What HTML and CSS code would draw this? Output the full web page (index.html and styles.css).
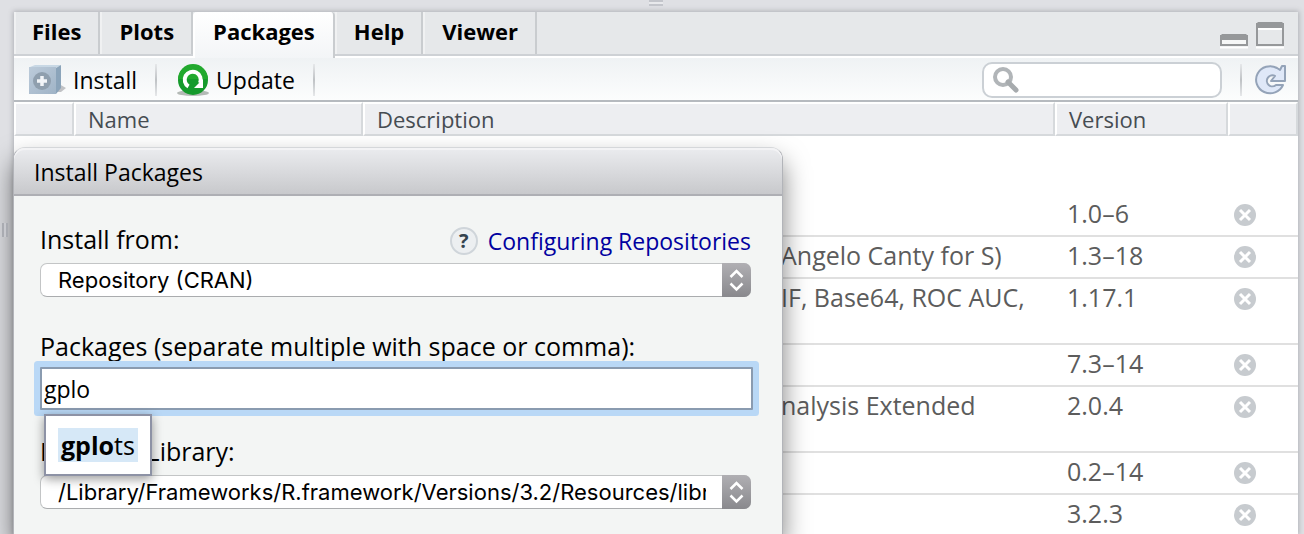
FILE: index.html
```html
<!DOCTYPE html>
<html lang="en">
<head>
<meta charset="utf-8">
<title>Packages</title>
<meta name="viewport" content="width=device-width, initial-scale=1">
<link rel="stylesheet" href="styles.css">
</head>
<body>
<svg class="defs" width="0" height="0" aria-hidden="true">
  <symbol id="remove" viewBox="0 0 22 22">
    <circle cx="11" cy="11" r="11" fill="#c7cbcf"/>
    <path d="M6 6l10 10M16 6l-10 10" stroke="#fff" stroke-width="3"/>
  </symbol>
  <symbol id="updown" viewBox="0 0 29 34">
    <path d="M8.500 14l6-6 6 6M8.500 20.500l6 6 6-6" fill="none" stroke="#fff" stroke-width="2.500"/>
  </symbol>
</svg>
<div class="grip grip-top"></div>
<div class="grip grip-left"></div>
<main class="panel">
  <nav class="tabs">
    <button class="tab">Files</button>
    <button class="tab">Plots</button>
    <button class="tab active">Packages</button>
    <button class="tab">Help</button>
    <button class="tab">Viewer</button>
    <span class="spacer"></span>
    <button class="window-button" aria-label="Minimize">
      <svg width="28" height="28" viewBox="0 0 28 28"><path d="M0 26.500h28" stroke="#fff" stroke-width="2"/><path d="M1 24V15h26v9z" fill="#f6f7f7" stroke="#96989a" stroke-width="2"/><path d="M0 19v-4l2-2h24l2 2v4z" fill="#96989a"/></svg>
    </button>
    <button class="window-button" aria-label="Maximize">
      <svg width="28" height="28" viewBox="0 0 28 28"><path d="M0 26.500h28M2 8h24" stroke="#fff" stroke-width="2"/><path d="M1 24V3h26v21z" fill="none" stroke="#96989a" stroke-width="2"/><path d="M0 7V3l2-2h24l2 2v4z" fill="#96989a"/></svg>
    </button>
  </nav>
  <div class="toolbar">
    <button class="tool">
      <svg width="40" height="32" viewBox="0 0 40 32">
        <defs><linearGradient id="box" x2="1" y2="1"><stop stop-color="#bccbda"/><stop offset="1" stop-color="#a0b4c7"/></linearGradient></defs>
        <path d="M29 28l2-8 7 4-5 4z" fill="#9b9da1" opacity=".6"/>
        <path d="M2 3l5-2h26l-5 3z" fill="#c8d8e5"/><path d="M28 4l5-3v23l-5 6z" fill="#8ba4ba"/>
        <path d="M1 3h27v27H1z" fill="url(#box)"/>
        <circle cx="14" cy="17" r="9" fill="#8f9fae"/><path d="M14 12v10M9 17h10" stroke="#f2f5f8" stroke-width="3.500"/>
      </svg>Install</button>
    <i class="divider"></i>
    <button class="tool">
      <svg width="36" height="32" viewBox="0 0 36 32">
        <ellipse cx="18" cy="29" rx="16" ry="3" fill="#8f9690" opacity=".65"/>
        <circle cx="18" cy="16" r="15" fill="#159a2c"/><path d="M3 15a15 15 0 0 1 30 0z" fill="#22a92e"/>
        <path d="M13.500 22.500A8 8 0 1 1 25 19" fill="none" stroke="#fff" stroke-width="4"/><path d="M28 15v9h-9z" fill="#fff"/>
      </svg>Update</button>
    <i class="divider"></i>
    <span class="spacer"></span>
    <label class="search">
      <svg width="27" height="27" viewBox="0 0 27 27"><circle cx="11" cy="10" r="8" fill="none" stroke="#b1b5b8" stroke-width="4"/><path d="M16 15l8 8" stroke="#a7abae" stroke-width="5" stroke-linecap="round"/></svg>
      <input type="text" aria-label="Search packages">
    </label>
    <i class="divider"></i>
    <button class="tool refresh" aria-label="Refresh">
      <svg width="34" height="34" viewBox="0 0 34 34"><path d="M29 22A14 13.500 0 1 1 23 5l3 2 2-4h3v15H17l4-5a5.500 5.500 0 1 0 1 9z" fill="#dfe8f8" stroke="#94a3b8" stroke-width="2" stroke-linejoin="round"/></svg>
    </button>
  </div>
  <table class="packages">
    <colgroup><col class="c-check"><col class="c-name"><col><col class="c-version"><col class="c-remove"></colgroup>
    <thead><tr><th></th><th>Name</th><th>Description</th><th>Version</th><th></th></tr></thead>
    <tbody>
      <tr class="group"><td colspan="5"></td></tr>
      <tr><td></td><td></td><td></td><td>1.0–6</td><td><button class="remove" aria-label="Remove"><svg><use href="#remove"/></svg></button></td></tr>
      <tr><td></td><td></td><td class="desc">Angelo Canty for S)</td><td>1.3–18</td><td><button class="remove" aria-label="Remove"><svg><use href="#remove"/></svg></button></td></tr>
      <tr class="tall"><td></td><td></td><td class="desc">IF, Base64, ROC AUC,</td><td>1.17.1</td><td><button class="remove" aria-label="Remove"><svg><use href="#remove"/></svg></button></td></tr>
      <tr><td></td><td></td><td></td><td>7.3–14</td><td><button class="remove" aria-label="Remove"><svg><use href="#remove"/></svg></button></td></tr>
      <tr class="tall"><td></td><td></td><td class="desc">nalysis Extended</td><td>2.0.4</td><td><button class="remove" aria-label="Remove"><svg><use href="#remove"/></svg></button></td></tr>
      <tr><td></td><td></td><td></td><td>0.2–14</td><td><button class="remove" aria-label="Remove"><svg><use href="#remove"/></svg></button></td></tr>
      <tr><td></td><td></td><td></td><td>3.2.3</td><td><button class="remove" aria-label="Remove"><svg><use href="#remove"/></svg></button></td></tr>
    </tbody>
  </table>
</main>
<section class="dialog" role="dialog" aria-labelledby="dialog-title">
  <h1 class="dialog-title" id="dialog-title">Install Packages</h1>
  <form class="form">
    <div class="label-row">
      <label for="source">Install from:</label>
      <a class="help" href="#"><span class="help-icon">?</span>Configuring Repositories</a>
    </div>
    <div class="select">
      <select id="source"><option>Repository (CRAN)</option></select>
      <svg class="arrows"><use href="#updown"/></svg>
    </div>
    <div class="label-row second"><label for="names">Packages (separate multiple with space or comma):</label></div>
    <div class="combo">
      <input class="names" id="names" type="text" value="gplo">
      <div class="suggestions"><div class="suggestion"><b>gplo</b>ts</div></div>
    </div>
    <div class="label-row third"><label for="library">Install to Library:</label></div>
    <div class="select">
      <select id="library"><option>/Library/Frameworks/R.framework/Versions/3.2/Resources/library</option></select>
      <svg class="arrows"><use href="#updown"/></svg>
    </div>
  </form>
</section>
</body>
</html>
```
FILE: styles.css
```css
* { box-sizing: border-box; }
html { height: 100%; }
body {
  position: relative;
  display: flex;
  height: 100%;
  margin: 0;
  padding: 12px 6px 0 14px;
  overflow: hidden;
  background: #dfe0e4;
  font: 22px/32px "Open Sans", "Noto Sans", sans-serif;
  color: #000;
}
button, input, select { font: inherit; color: inherit; }
button { padding: 0; border: 0; background: none; }
.defs { position: absolute; }
.spacer { flex: 1; }
.grip { position: absolute; }
.grip-top { top: 0; left: 50%; width: 14px; height: 6px; margin-left: -3px; background: linear-gradient(#c3c5cb 2px, #e8e9ec 2px 4px, #c3c5cb 4px); }
.grip-left { top: 223px; left: 2px; z-index: 3; width: 6px; height: 14px; background: linear-gradient(90deg, #a9abb1 2px, #c8c9ce 2px 4px, #a9abb1 4px); }

.panel { flex: 1; min-width: 0; background: #fff; box-shadow: 0 0 5px 1px #b0b1b6; }
.tabs { display: flex; height: 44px; background: #e6e8ea; border-bottom: 2px solid #ced1d5; }
.tab {
  height: 42px;
  padding: 0 17px 4px;
  border-left: 2px solid #f0f1f2;
  border-right: 2px solid #c9cccf;
  font-weight: 700;
}
.tab:first-child { padding-left: 16px; }
.tab.active { height: 46px; padding: 0 18px 8px; background: linear-gradient(#fff, #f3f5f7); border-left-color: #fff; border-radius: 4px 4px 0 0; }
.window-button { display: flex; align-items: flex-start; width: 28px; margin: 9px 8px 0 0; }
.window-button:last-child { margin-right: 14px; }

.toolbar {
  display: flex;
  align-items: center;
  height: 46px;
  padding: 2px 10px 0 14px;
  background: linear-gradient(#eff2f4, #fcfdfd);
  border-top: 2px solid #fff;
  border-bottom: 2px solid #b6babf;
}
.tool { display: flex; align-items: center; gap: 5px; font-size: 23px; }
.divider { width: 2px; height: 32px; margin: 0 18px; background: linear-gradient(#e6e8ea, #bfc2c5, #e6e8ea); }
.search {
  display: flex;
  align-items: center;
  width: 240px;
  height: 36px;
  padding-left: 8px;
  border: 2px solid #cbd0d5;
  border-radius: 10px;
  background: #fff;
}
.search input { flex: 1; min-width: 0; border: 0; outline: 0; background: none; }
.refresh { margin-left: -6px; }

.packages { width: 100%; border-collapse: separate; border-spacing: 0; table-layout: fixed; color: #5c5c5c; }
.c-check { width: 60px; }
.c-name { width: 289px; }
.c-version { width: 173px; }
.c-remove { width: 70px; }
.packages th {
  height: 34px;
  padding: 0 0 0 12px;
  background: #edeef1;
  border: 2px solid #d6d9dc;
  border-top-color: #fff;
  border-left-color: #fff;
  color: #464c52;
  font-weight: 400;
  line-height: 30px;
  text-align: left;
}
.packages td { height: 42px; padding: 2px 0 4px 12px; border-bottom: 2px solid #e0e0e0; font-size: 25px; vertical-align: top; white-space: nowrap; }
.packages .group td { height: 59px; padding: 0; border: 0; }
.packages .tall td { height: 66px; }
.packages .desc { padding-left: 418px; }
.remove { display: block; width: 22px; height: 22px; margin: 7px 0 0 -6px; }
.remove svg { display: block; width: 22px; height: 22px; }

.dialog {
  position: absolute;
  top: 147px;
  bottom: 0;
  left: 13px;
  width: 770px;
  border: 1px solid #b2b4b9;
  border-top-color: #d5d7da;
  border-bottom: 0;
  border-radius: 12px 12px 0 0;
  background: #f3f5f4;
  box-shadow: 0 14px 26px 0 rgba(0, 0, 0, .5);
}
.dialog-title {
  height: 48px;
  margin: 0;
  padding: 8px 20px;
  border-bottom: 2px solid #aeafb4;
  border-radius: 11px 11px 0 0;
  background: linear-gradient(#ebecef, #c8c9cc);
  box-shadow: inset 0 2px 0 #f3f3f5;
  font-size: 23px;
  font-weight: 400;
  line-height: 32px;
}
.form { padding: 27px 31px 0 26px; }
.label-row { display: flex; align-items: center; justify-content: space-between; height: 32px; margin-bottom: 8px; font-size: 25px; }
.label-row.second { margin-top: 33px; margin-bottom: 5px; }
.label-row.third { margin-top: 25px; margin-bottom: 8px; }
.help { display: flex; align-items: center; gap: 10px; padding-top: 4px; color: #0000a0; font-size: 23px; text-decoration: none; }
.help-icon { width: 28px; height: 28px; border: 2px solid #cfd5da; border-radius: 50%; background: #eceff1; color: #34434e; font-size: 20px; font-weight: 700; line-height: 24px; text-align: center; }
.select { position: relative; height: 34px; }
.select select {
  display: block;
  width: 100%;
  height: 34px;
  padding: 0 44px 0 17px;
  border: 1px solid #c3c5c6;
  border-bottom-color: #aaacae;
  border-radius: 7px;
  background: #fff;
  appearance: none;
  font: 22px/30px Inter, "Liberation Sans", sans-serif;
}
.arrows { position: absolute; top: 0; right: 0; width: 29px; height: 34px; border-radius: 0 7px 7px 0; background: linear-gradient(#b0afb3, #89898d); pointer-events: none; }
.combo { position: relative; margin-right: -2px; }
.names {
  display: block;
  width: 100%;
  height: 43px;
  padding: 0 2px;
  border: 2px solid #8a9bb0;
  border-radius: 1px;
  outline: 0;
  background: #fff;
  box-shadow: 0 0 0 6px #b9d8f6;
  font-size: 23px;
}
.suggestions { position: absolute; top: 47px; left: 4px; z-index: 1; padding: 12px; border: 2px solid #8d92a5; background: #fff; box-shadow: 0 3px 10px rgba(0, 0, 0, .4); }
.suggestion { padding: 0 3px; background: #d6e8f7; font-size: 25px; line-height: 34px; }
```
